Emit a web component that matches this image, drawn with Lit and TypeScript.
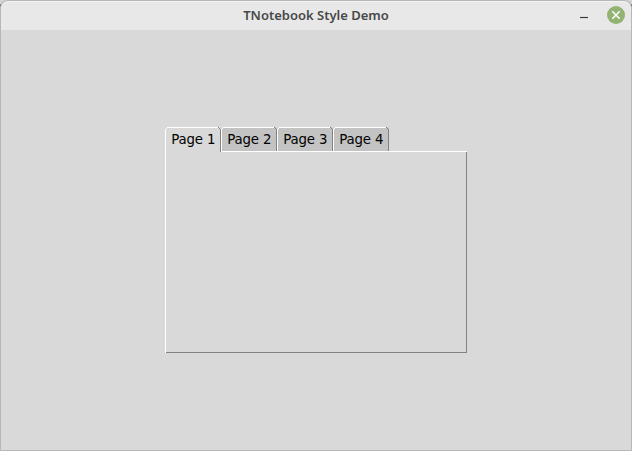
import { LitElement, html, css, svg } from "lit";
import { customElement, property, state } from "lit/decorators.js";
import { classMap } from "lit/directives/class-map.js";

@customElement("title-bar")
class TitleBar extends LitElement {
  @property() heading = "";
  static styles = css`
    :host { display: block; height: 30px; background: linear-gradient(#d4d4d4 4px, #2a2d38 5px, #55586a 7px, #b8b8b8 8px); }
    .bar {
      box-sizing: border-box; height: 30px; background: #e8e8e8;
      border: 1px solid #b8b8b8; border-bottom: 0;
      border-radius: 8px 8px 0 0; box-shadow: inset 0 1px #f3f3f3;
      display: grid; grid-template-columns: 60px 1fr 60px; align-items: start;
    }
    .title {
      grid-column: 2; text-align: center; color: #484848; white-space: nowrap;
      font: 600 13px/28px "Noto Sans", "Open Sans", sans-serif;
    }
    .controls { display: flex; justify-content: flex-end; padding: 5px 6px 0 0; }
    svg { display: block; }
  `;
  render() {
    return html`<div class="bar">
      <div class="title">${this.heading}</div>
      <div class="controls">
        <svg width="46" height="18" viewBox="0 0 46 18">
          <path d="M1 11.5h8" stroke="#3c3c3c" stroke-width="1.2" />
          <circle cx="37" cy="9" r="9" fill="#92b372" />
          <path d="M33.3 5.3l7.4 7.4M40.7 5.3l-7.4 7.4" stroke="#fff" stroke-width="1.5" />
        </svg>
      </div>
    </div>`;
  }
}

@customElement("tab-notebook")
class TabNotebook extends LitElement {
  @property({ attribute: false }) pages: string[] = [];
  @state() current = 0;
  static styles = css`
    :host { display: block; width: 302px; }
    .tabs { display: flex; height: 24px; }
    .tab { display: grid; width: 56px; height: 24px; cursor: default; }
    .tab.selected { height: 25px; z-index: 1; }
    .tab > * { grid-area: 1 / 1; }
    .label {
      font: 13.33px/24px "DejaVu Sans", sans-serif; letter-spacing: -0.15px; color: #000;
      padding: 1px 0 0 6.2px; height: 23px; white-space: nowrap;
    }
    svg { display: block; }
    .face { fill: #c3c3c3; }
    .selected .face { fill: #d9d9d9; }
    .light { stroke: #fff; fill: none; }
    .dark { stroke: #828282; fill: none; }
    .pane {
      display: grid; grid-template: 1px 1fr 1px / 1px 1fr 1px;
      height: 202px; background: #d9d9d9;
    }
    .top { grid-area: 1 / 1 / 2 / 4; background: #fff; }
    .left { grid-area: 1 / 1 / 4 / 2; background: #fff; }
    .right { grid-area: 2 / 3 / 4 / 4; background: #828282; }
    .bottom { grid-area: 3 / 2 / 4 / 4; background: #828282; }
  `;
  render() {
    return html`
      <div class="tabs">
        ${this.pages.map((name, i) => {
          const selected = i === this.current;
          const h = selected ? 25 : 24;
          return html`<div class=${classMap({ tab: true, selected })} @click=${() => (this.current = i)}>
            <svg width="56" height=${h} viewBox="0 0 56 ${h}" shape-rendering="crispEdges">
              ${svg`<path class="face" d="M0 2h1V1h1V0h52l2 2v${h - 2}H0z" />
              <path class="light" d="M.5 ${h}V2M1 1.5h1M2 .5h51" />
              <path class="dark" d="M53 .5h1M54 1.5h1M55.5 2v${h - 2}" />`}
            </svg>
            <div class="label">${name}</div>
          </div>`;
        })}
      </div>
      <div class="pane">
        <div class="top"></div><div class="left"></div>
        <div class="right"></div><div class="bottom"></div>
      </div>`;
  }
}

@customElement("app-root")
class AppRoot extends LitElement {
  static styles = css`
    :host { display: block; width: 632px; height: 451px; overflow: hidden; }
    .window { display: flex; flex-direction: column; height: 451px; }
    .body {
      flex: 1; box-sizing: border-box; background: #d9d9d9;
      border: 1px solid #b8b8b8; border-top: 0;
      display: flex; justify-content: center; align-items: flex-start; padding-top: 97px;
    }
  `;
  render() {
    return html`<div class="window">
      <title-bar heading="TNotebook Style Demo"></title-bar>
      <div class="body">
        <tab-notebook .pages=${["Page 1", "Page 2", "Page 3", "Page 4"]}></tab-notebook>
      </div>
    </div>`;
  }
}
